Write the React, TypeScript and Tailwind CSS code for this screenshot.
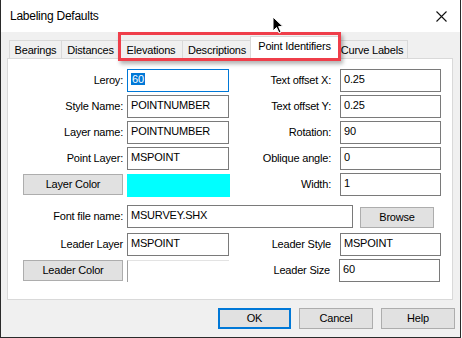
import React from "react";

const font = "font-['Liberation_Sans',Arial,sans-serif] text-[11px] tracking-[-0.2px] text-black";

const Label = ({ text, w }: { text: string; w: string }) => (
  <div className={`${w} h-full flex items-center justify-end whitespace-nowrap`}>{text}</div>
);

const Field = ({ value, w, focused }: { value: string; w: string; focused?: boolean }) => (
  <div
    className={`${w} h-[23px] bg-white border px-[3px] pt-[3px] leading-[13px] whitespace-nowrap ${
      focused ? "border-[#0078d7]" : "border-[#7a7a7a]"
    }`}
  >
    {focused ? <span className="bg-[#0078d7] text-white px-px">{value}</span> : value}
  </div>
);

const Btn = ({ text, w, primary }: { text: string; w: string; primary?: boolean }) => (
  <div
    className={`${w} h-[21px] flex items-center justify-center bg-[#e1e1e1] ${
      primary ? "border-2 border-[#0078d7]" : "border border-[#adadad]"
    }`}
  >
    {text}
  </div>
);

const Tab = ({ text, w, first }: { text: string; w: string; first?: boolean }) => (
  <div
    className={`${w} h-[18px] pt-px flex items-center justify-center whitespace-nowrap border-t border-r border-[#d9d9d9] bg-[#f0f0f0] ${
      first ? "border-l" : ""
    }`}
  >
    {text}
  </div>
);

const Row = ({ children, className = "" }: { children: React.ReactNode; className?: string }) => (
  <div className={`flex h-[23px] items-start ${className}`}>{children}</div>
);

const App = () => {
  return (
    <div className="w-[462px] h-[338px] bg-white">
      <div className={`${font} relative w-[461px] h-[338px] flex flex-col border-l border-r border-b border-[#2a2a2a]`}>
        {/* title bar */}
        <div className="h-[32px] bg-white flex items-center pl-[9px] pr-[9px] justify-between">
          <span className="text-[12px] tracking-[-0.25px]">Labeling Defaults</span>
          <svg width="11" height="11" viewBox="0 0 11 11" className="mr-[4px]">
            <path d="M0.5 0.5 L10.5 10.5 M10.5 0.5 L0.5 10.5" stroke="#111" strokeWidth="1.1" />
          </svg>
        </div>

        <div className="flex-1 bg-[#f0f0f0] pt-[4px] flex flex-col">
          {/* tabs */}
          <div className="flex items-end h-[22px] pl-[8px]">
            <Tab text="Bearings" w="w-[53px]" first />
            <Tab text="Distances" w="w-[58px]" />
            <Tab text="Elevations" w="w-[63px]" />
            <Tab text="Descriptions" w="w-[69px]" />
            <div className="relative z-10 w-[89px] h-[23px] -mb-px -mx-[2px] pb-[3px] flex items-center justify-center whitespace-nowrap bg-white border border-b-0 border-[#d9d9d9]">
              Point Identifiers
            </div>
            <Tab text="Curve Labels" w="w-[71px]" />
          </div>

          {/* panel */}
          <div className="ml-[6px] w-[446px] h-[242px] bg-white border border-[#d9d9d9] pt-[10px] flex flex-col">
            <div className="flex flex-col gap-[3px]">
              <Row>
                <Label text="Leroy:" w="w-[115px]" />
                <div className="ml-[4px]"><Field value="60" w="w-[102px]" focused /></div>
                <Label text="Text offset X:" w="w-[102px]" />
                <div className="ml-[9px]"><Field value="0.25" w="w-[101px]" /></div>
              </Row>
              <Row>
                <Label text="Style Name:" w="w-[115px]" />
                <div className="ml-[4px]"><Field value="POINTNUMBER" w="w-[102px]" /></div>
                <Label text="Text offset Y:" w="w-[102px]" />
                <div className="ml-[9px]"><Field value="0.25" w="w-[101px]" /></div>
              </Row>
              <Row>
                <Label text="Layer name:" w="w-[115px]" />
                <div className="ml-[4px]"><Field value="POINTNUMBER" w="w-[102px]" /></div>
                <Label text="Rotation:" w="w-[102px]" />
                <div className="ml-[9px]"><Field value="90" w="w-[101px]" /></div>
              </Row>
              <Row>
                <Label text="Point Layer:" w="w-[115px]" />
                <div className="ml-[4px]"><Field value="MSPOINT" w="w-[102px]" /></div>
                <Label text="Oblique angle:" w="w-[102px]" />
                <div className="ml-[9px]"><Field value="0" w="w-[101px]" /></div>
              </Row>
              <Row>
                <div className="ml-[15px] mt-px"><Btn text="Layer Color" w="w-[100px]" /></div>
                <div className="ml-[4px] mt-px w-[103px] h-[23px] bg-[#00ffff]" />
                <Label text="Width:" w="w-[101px]" />
                <div className="ml-[9px]"><Field value="1" w="w-[101px]" /></div>
              </Row>
            </div>

            <div className="flex flex-col gap-[3px] mt-[9px]">
              <Row className="mb-[2px]">
                <Label text="Font file name:" w="w-[115px]" />
                <div className="ml-[4px]"><Field value="MSURVEY.SHX" w="w-[226px]" /></div>
                <div className="ml-[7px] mt-[2px]"><Btn text="Browse" w="w-[74px]" /></div>
              </Row>
              <Row>
                <Label text="Leader Layer" w="w-[115px]" />
                <div className="ml-[4px]"><Field value="MSPOINT" w="w-[102px]" /></div>
                <Label text="Leader Style" w="w-[102px]" />
                <div className="ml-[9px]"><Field value="MSPOINT" w="w-[101px]" /></div>
              </Row>
              <Row>
                <div className="ml-[15px] mt-px"><Btn text="Leader Color" w="w-[100px]" /></div>
                <div className="ml-[4px] mt-px w-[102px] h-[22px] border-t border-l border-t-[#e3e3e3] border-l-[#a0a0a0]" />
                <Label text="Leader Size" w="w-[101px]" />
                <div className="ml-[9px]"><Field value="60" w="w-[101px]" /></div>
              </Row>
            </div>
          </div>

          {/* dialog buttons */}
          <div className="flex justify-end gap-[8px] mt-[8px] pr-[5px]">
            <Btn text="OK" w="w-[73px]" primary />
            <Btn text="Cancel" w="w-[74px]" />
            <Btn text="Help" w="w-[74px]" />
          </div>
        </div>

        {/* annotation highlight */}
        <div className="absolute left-[117px] top-[32px] w-[223px] h-[29px] border-[3px] border-[#ef3e4a] shadow-[2px_3px_4px_rgba(0,0,0,0.3)] pointer-events-none z-20" />

        {/* mouse cursor */}
        <svg className="absolute left-[271px] top-[16px] z-30" width="12" height="19" viewBox="0 0 12 19">
          <path
            d="M1 1 L1 15 L4.5 11.5 L7 17 L9 16 L6.6 10.6 L11 10.6 Z"
            fill="#000"
            stroke="#fff"
            strokeWidth="1"
            strokeLinejoin="round"
          />
        </svg>
      </div>
    </div>
  );
};

export default App;
